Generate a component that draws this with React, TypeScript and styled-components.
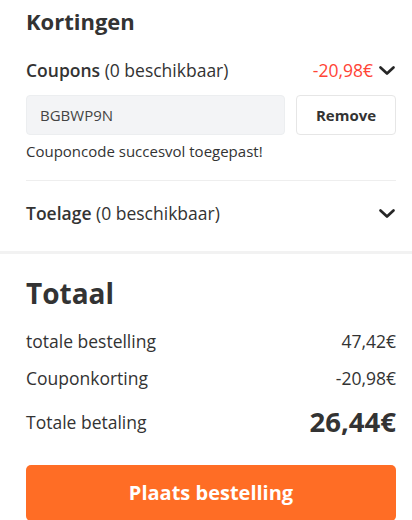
import styled, { createGlobalStyle } from "styled-components";

const Global = createGlobalStyle`
  body {
    margin: 0;
    background: #fff;
    font-family: "Open Sans", "Liberation Sans", sans-serif;
    color: #333;
  }
`;

const Section = styled.section`
  padding: 0 16px 0 26px;
`;

const Heading = styled.h2<{ size: number }>`
  margin: 0;
  font-size: ${(p) => p.size}px;
  font-weight: 700;
  line-height: 1.3;
  color: #333;
`;

const Row = styled.div<{ height: number }>`
  display: flex;
  align-items: center;
  justify-content: space-between;
  height: ${(p) => p.height}px;
  font-size: 17.5px;
`;

const Label = styled.span`
  color: #333;
  b {
    font-weight: 600;
  }
`;

const Right = styled.span`
  display: flex;
  align-items: center;
  gap: 5px;
`;

const Discount = styled.span`
  color: #ff4436;
`;

const CouponForm = styled.div`
  display: flex;
  gap: 11px;
`;

const CodeField = styled.div`
  flex: 1;
  height: 38px;
  border: 1px solid #eceef0;
  border-radius: 4px;
  background: #f3f4f6;
  display: flex;
  align-items: center;
  padding: 0 13px;
  font-size: 15px;
  color: #444;
`;

const RemoveButton = styled.button`
  width: 100px;
  height: 40px;
  border: 1px solid #e6e6e6;
  border-radius: 4px;
  background: #fff;
  font-family: inherit;
  font-size: 15px;
  font-weight: 700;
  color: #333;
`;

const Hint = styled.p`
  margin: 6px 0 0;
  font-size: 15px;
  color: #333;
`;

const Divider = styled.hr`
  margin: 0;
  border: 0;
  border-top: 1px solid #eeeeee;
`;

const Band = styled.div`
  height: 3px;
  background: #f2f2f2;
`;

const Line = styled.div<{ height: number }>`
  display: flex;
  align-items: center;
  justify-content: space-between;
  height: ${(p) => p.height}px;
  font-size: 17.5px;
  color: #333;
`;

const Big = styled.span`
  font-size: 27.5px;
  font-weight: 700;
  color: #333;
`;

const OrderButton = styled.button`
  width: 100%;
  height: 56px;
  border: 0;
  border-radius: 5px;
  background: #ff6d25;
  color: #fff;
  font-family: inherit;
  font-size: 20px;
  font-weight: 700;
`;

const Chevron = () => (
  <svg width="18" height="18" viewBox="0 0 18 18" fill="none">
    <path d="M2.5 6.5 9 12.5l6.5-6" stroke="#262626" strokeWidth="2.7" strokeLinecap="round" strokeLinejoin="round" />
  </svg>
);

export default function App() {
  return (
    <>
      <Global />
      <Section>
        <Heading size={22} style={{ paddingTop: 7 }}>Kortingen</Heading>
        <Row height={50} style={{ marginTop: 9 }}>
          <Label>
            <b>Coupons</b> (0 beschikbaar)
          </Label>
          <Right>
            <Discount>-20,98€</Discount>
            <Chevron />
          </Right>
        </Row>
        <CouponForm>
          <CodeField>BGBWP9N</CodeField>
          <RemoveButton>Remove</RemoveButton>
        </CouponForm>
        <Hint>Couponcode succesvol toegepast!</Hint>
        <div style={{ height: 19 }} />
        <Divider />
        <Row height={64}>
          <Label>
            <b>Toelage</b> (0 beschikbaar)
          </Label>
          <Chevron />
        </Row>
      </Section>
      <div style={{ height: 6 }} />
      <Band />
      <Section>
        <Heading size={28} style={{ paddingTop: 21 }}>Totaal</Heading>
        <Line height={37} style={{ marginTop: 12 }}>
          <span>totale bestelling</span>
          <span>47,42€</span>
        </Line>
        <Line height={37}>
          <span>Couponkorting</span>
          <span>-20,98€</span>
        </Line>
        <Line height={50}>
          <span>Totale betaling</span>
          <Big>26,44€</Big>
        </Line>
        <div style={{ height: 18 }} />
        <OrderButton>Plaats bestelling</OrderButton>
      </Section>
    </>
  );
}
